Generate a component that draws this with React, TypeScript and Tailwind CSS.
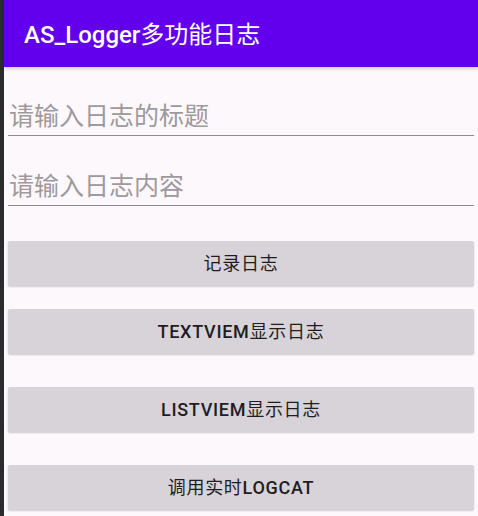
const font = { fontFamily: '"Roboto", "Noto Sans CJK SC", sans-serif' };

const inputs = [
  { placeholder: '请输入日志的标题', mt: 'mt-[31px]' },
  { placeholder: '请输入日志内容', mt: 'mt-[32px]' },
];

// latin parts are medium, CJK parts stay regular like the Android rendering
const buttons = [
  { parts: [{ t: '记录日志', cjk: true }], mt: 'mt-[35px]' },
  { parts: [{ t: 'TEXTVIEM', cjk: false }, { t: '显示日志', cjk: true }], mt: 'mt-[23px]' },
  { parts: [{ t: 'LISTVIEM', cjk: false }, { t: '显示日志', cjk: true }], mt: 'mt-[33px]' },
  { parts: [{ t: '调用实时', cjk: true }, { t: 'LOGCAT', cjk: false }], mt: 'mt-[33px]' },
];

export default function App() {
  return (
    <div className="flex h-[516px] w-[478px] overflow-hidden" style={font}>
      {/* left window edge */}
      <div className="w-[4px] shrink-0 bg-[#2b2b2b]" />

      <div className="flex flex-1 flex-col bg-[#fdf8fc]">
        {/* Toolbar */}
        <div className="relative z-10 flex h-[67px] shrink-0 items-center bg-[#6200ee] pl-[20px] pt-[3px] shadow-[0_2px_3px_rgba(0,0,0,0.18)]">
          <h1 className="text-[24px] leading-none text-white">
            <span className="font-medium">AS_Logger</span>
            <span className="font-normal">多功能日志</span>
          </h1>
        </div>

        <div className="flex flex-col px-[4px]">
          {inputs.map((input) => (
            <div
              key={input.placeholder}
              className={`${input.mt} flex h-[38px] items-center border-b-[1.5px] border-[#8f8c8f] pl-[1px]`}
            >
              <input
                className="w-full bg-transparent text-[25px] leading-none text-[#1c1b1f] outline-none placeholder:text-[#9d999d]"
                placeholder={input.placeholder}
                style={font}
              />
            </div>
          ))}

          {buttons.map((btn, i) => (
            <button
              key={i}
              className={`${btn.mt} flex h-[45px] items-center justify-center rounded-[2px] bg-[#d8d3d8] text-[18px] tracking-[0.04em] text-[#1f1d1f] shadow-[0_1px_2px_rgba(0,0,0,0.2)]`}
              style={font}
            >
              {btn.parts.map((p, j) => (
                <span key={j} className={p.cjk ? 'font-normal' : 'font-medium'}>
                  {p.t}
                </span>
              ))}
            </button>
          ))}
        </div>
      </div>
    </div>
  );
}
